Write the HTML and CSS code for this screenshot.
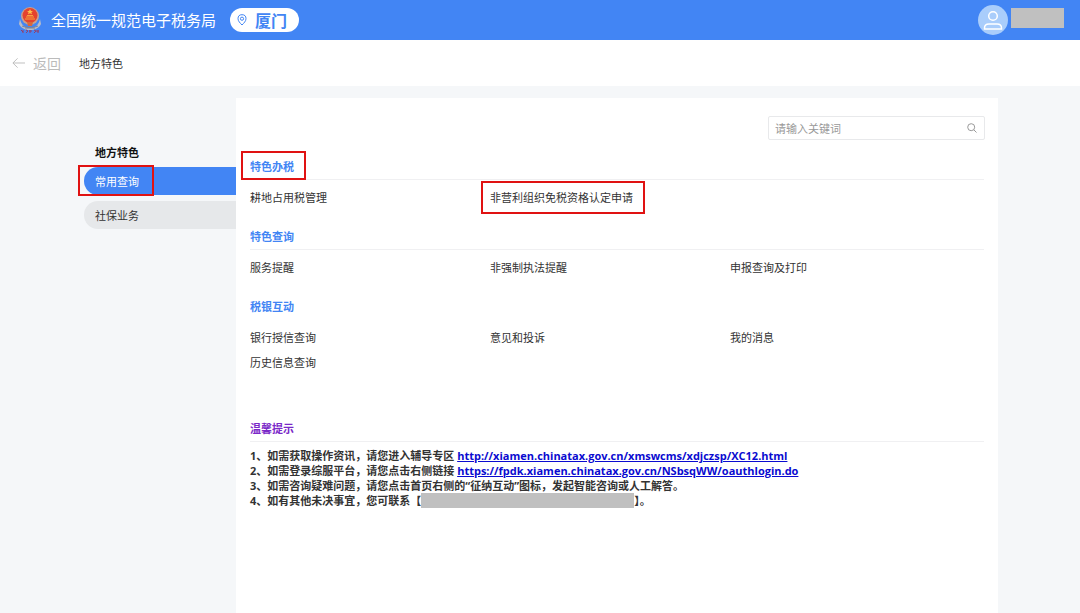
FILE: index.html
```html
<!DOCTYPE html>
<html lang="zh-CN">
<head>
<meta charset="utf-8">
<meta name="viewport" content="width=device-width, initial-scale=1">
<title>地方特色 - 全国统一规范电子税务局</title>
<link rel="stylesheet" href="styles.css">
</head>
<body>
<header class="topbar">
  <svg class="emblem" viewBox="0 0 24 28" aria-hidden="true">
    <path d="M2 13c1 5 4 9 10 9s9-4 10-9l1 5c-2 4-6 6-11 6S3 22 1 18z" fill="#b9bcc9"/>
    <path d="M4 20c5 2 11 2 16 0M7 22h10" stroke="#7d8396" fill="none"/>
    <circle cx="12" cy="10" r="9" fill="#c9a08c"/>
    <circle cx="12" cy="9.500" r="7.500" fill="#e4432f"/>
    <path d="M12 3l1 2h2l-1.600 1.300.6 2L12 7.200l-2 1.100.6-2L9 5h2z" fill="#ffc04a"/>
    <path d="M7 13h10M8 11h8M9 9.500h6" stroke="#f7a33c" fill="none"/>
    <path d="M9 16h6l-1 4h-4z" fill="#d8683c"/>
    <path d="M3 24l2 2m0-2v3m3-3l2 1-2 2m4-3v3m-1-2h3m2-1l2 1-2 2m4-3v3m1-2h-3" stroke="#933f69" fill="none"/>
  </svg>
  <h1 class="site-name">全国统一规范电子税务局</h1>
  <button class="region" type="button">
    <svg class="pin" viewBox="0 0 10 12" aria-hidden="true"><path d="M5 11C3 9 1 7 1 4.700a4 4 0 0 1 8 0C9 7 7 9 5 11z"/><circle cx="5" cy="4.700" r="1.600"/></svg>
    <span>厦门</span>
  </button>
  <div class="account">
    <svg class="avatar" viewBox="0 0 30 30" aria-hidden="true"><circle cx="15" cy="15" r="15" fill="#a9cdfb" stroke="none"/><circle cx="15" cy="11" r="4.300"/><path d="M6.500 24v-1c0-2.500 2-4 4.500-4h8c2.500 0 4.500 1.500 4.500 4v1z"/></svg>
    <span class="mask mask-name"></span>
  </div>
</header>

<nav class="crumbs">
  <a class="back" href="#"><svg class="arrow" viewBox="0 0 14 12" aria-hidden="true"><path d="M14 6H1M6 1L1 6l5 5"/></svg>返回</a>
  <span>地方特色</span>
</nav>

<main class="layout">
  <aside class="sidebar">
    <h2 class="side-title">地方特色</h2>
    <nav class="side-nav">
      <a class="side-link active" href="#"><span>常用查询</span></a>
      <a class="side-link" href="#"><span>社保业务</span></a>
    </nav>
  </aside>

  <div class="panel">
    <form class="search">
      <input class="search-input" type="text" placeholder="请输入关键词" aria-label="请输入关键词">
      <button class="search-button" type="submit" aria-label="搜索"><svg class="lens" viewBox="0 0 10 10" aria-hidden="true"><circle cx="4.200" cy="4.200" r="3.500"/><path d="M6.800 6.800L9.500 9.500"/></svg></button>
    </form>

    <section class="group">
      <h2 class="group-title"><span class="marked marked-title">特色办税</span></h2>
      <ul class="links">
        <li><a href="#">耕地占用税管理</a></li>
        <li><a class="marked marked-link" href="#">非营利组织免税资格认定申请</a></li>
      </ul>
    </section>
    <section class="group">
      <h2 class="group-title">特色查询</h2>
      <ul class="links">
        <li><a href="#">服务提醒</a></li>
        <li><a href="#">非强制执法提醒</a></li>
        <li><a href="#">申报查询及打印</a></li>
      </ul>
    </section>
    <section class="group">
      <h2 class="group-title plain">税银互动</h2>
      <ul class="links">
        <li><a href="#">银行授信查询</a></li>
        <li><a href="#">意见和投诉</a></li>
        <li><a href="#">我的消息</a></li>
        <li><a href="#">历史信息查询</a></li>
      </ul>
    </section>
    <section class="tips">
      <h2 class="group-title tips-title">温馨提示</h2>
      <div class="tips-text">
        <p>1、如需获取操作资讯，请您进入辅导专区 <a href="http://xiamen.chinatax.gov.cn/xmswcms/xdjczsp/XC12.html">http://xiamen.chinatax.gov.cn/xmswcms/xdjczsp/XC12.html</a></p>
        <p>2、如需登录综服平台，请您点击右侧链接 <a href="https://fpdk.xiamen.chinatax.gov.cn/NSbsqWW/oauthlogin.do">https://fpdk.xiamen.chinatax.gov.cn/NSbsqWW/oauthlogin.do</a></p>
        <p>3、如需咨询疑难问题，请您点击首页右侧的“征纳互动”图标，发起智能咨询或人工解答。</p>
        <p class="contact"><span>4、如有其他未决事宜，您可联系【</span><span class="mask mask-contact"></span><span>】。</span></p>
      </div>
    </section>
  </div>
</main>
</body>
</html>
```
FILE: styles.css
```css
* {
  box-sizing: border-box;
}

body {
  margin: 0;
  min-height: 100vh;
  display: flex;
  flex-direction: column;
  background: #f5f7f9;
  color: #333;
  font: 11px/15px "Open Sans", "Noto Sans CJK SC", sans-serif;
}

h1, h2, p, ul {
  margin: 0;
  padding: 0;
}

a {
  color: inherit;
  text-decoration: none;
}

button {
  border: 0;
  font-family: inherit;
  cursor: pointer;
}

.topbar {
  display: flex;
  align-items: center;
  height: 40px;
  padding: 0 16px 0 18px;
  background: #4285f4;
  color: #fff;
}

.emblem {
  width: 24px;
  height: 28px;
  margin-right: 9px;
}

.site-name {
  font-size: 15px;
  line-height: 24px;
  font-weight: 400;
}

.region {
  display: flex;
  align-items: center;
  gap: 8px;
  height: 24px;
  margin-left: 14px;
  padding: 0 12px 0 7px;
  border-radius: 12px;
  background: #fff;
  color: #4285f4;
  font-size: 16px;
  font-weight: 700;
}

.pin {
  width: 10px;
  height: 12px;
  fill: none;
  stroke: #4285f4;
}

.account {
  display: flex;
  align-items: center;
  gap: 3px;
  margin-left: auto;
}

.avatar {
  width: 30px;
  height: 30px;
  fill: none;
  stroke: #fff;
  stroke-width: 1.5;
}

.mask {
  background: #c0c0c0;
}

.mask-name {
  width: 53px;
  height: 20px;
  margin-bottom: 4px;
}

.crumbs {
  display: flex;
  align-items: center;
  gap: 18px;
  height: 46px;
  padding: 0 12px;
  background: #fff;
}

.back {
  display: flex;
  align-items: center;
  gap: 8px;
  color: #bbb;
  font-size: 14px;
}

.arrow {
  width: 13px;
  height: 12px;
  fill: none;
  stroke: #bbb;
}

.layout {
  flex: 1;
  display: flex;
  padding: 12px 82px 0 84px;
}

.sidebar {
  flex: 0 0 152px;
  padding-top: 47px;
}

.side-title {
  margin-bottom: 7px;
  padding-left: 11px;
  color: #111;
  font-size: 11px;
}

.side-nav {
  display: grid;
  gap: 6px;
}

.side-link {
  position: relative;
  display: flex;
  align-items: center;
  height: 28px;
  padding-left: 11px;
  border-radius: 14px 0 0 14px;
  background: #e6e8ea;
}

.side-link.active {
  background: #4285f4;
  color: #fff;
}

.side-link.active::after {
  content: "";
  position: absolute;
  inset: -2px 82px -1px -6px;
  border: 2px solid #e01212;
}

.panel {
  flex: 1;
  min-width: 0;
  padding: 18px 14px;
  background: #fff;
}

.search {
  display: flex;
  align-items: center;
  width: 217px;
  height: 24px;
  margin: 0 -1px 13px auto;
  border: 1px solid #e8e9eb;
  border-radius: 2px;
}

.search-input {
  flex: 1;
  min-width: 0;
  padding: 0 6px;
  border: 0;
  outline: 0;
  background: none;
  color: #333;
  font: inherit;
}

.search-input::placeholder {
  color: #999;
}

.search-button {
  display: flex;
  padding: 0 7px;
  background: none;
}

.lens {
  width: 10px;
  height: 10px;
  fill: none;
  stroke: #999;
}

.group {
  margin-bottom: 13px;
}

.group-title {
  margin-bottom: 5px;
  padding-top: 2px;
  border-bottom: 1px solid #f0f0f2;
  color: #4285f4;
  font-size: 11px;
  line-height: 24px;
}

.group-title.plain {
  border-color: transparent;
}

.links {
  display: grid;
  grid-template-columns: 240px 240px 1fr;
  list-style: none;
  line-height: 25px;
}

.marked {
  position: relative;
}

.marked::after {
  content: "";
  position: absolute;
  border: 2px solid #e01212;
}

.marked-title::after {
  inset: -8px -12px -6px -9px;
}

.marked-link::after {
  inset: -9px -12px -9px -9px;
}

.tips {
  margin-top: 40px;
}

.tips-title {
  color: #7a28c8;
}

.tips-text {
  padding-top: 1px;
  font-weight: 700;
}

.tips-text a {
  color: #0a0ad0;
  text-decoration: underline;
}

.contact {
  display: flex;
  align-items: center;
}

.mask-contact {
  width: 213px;
  height: 15px;
}
```
